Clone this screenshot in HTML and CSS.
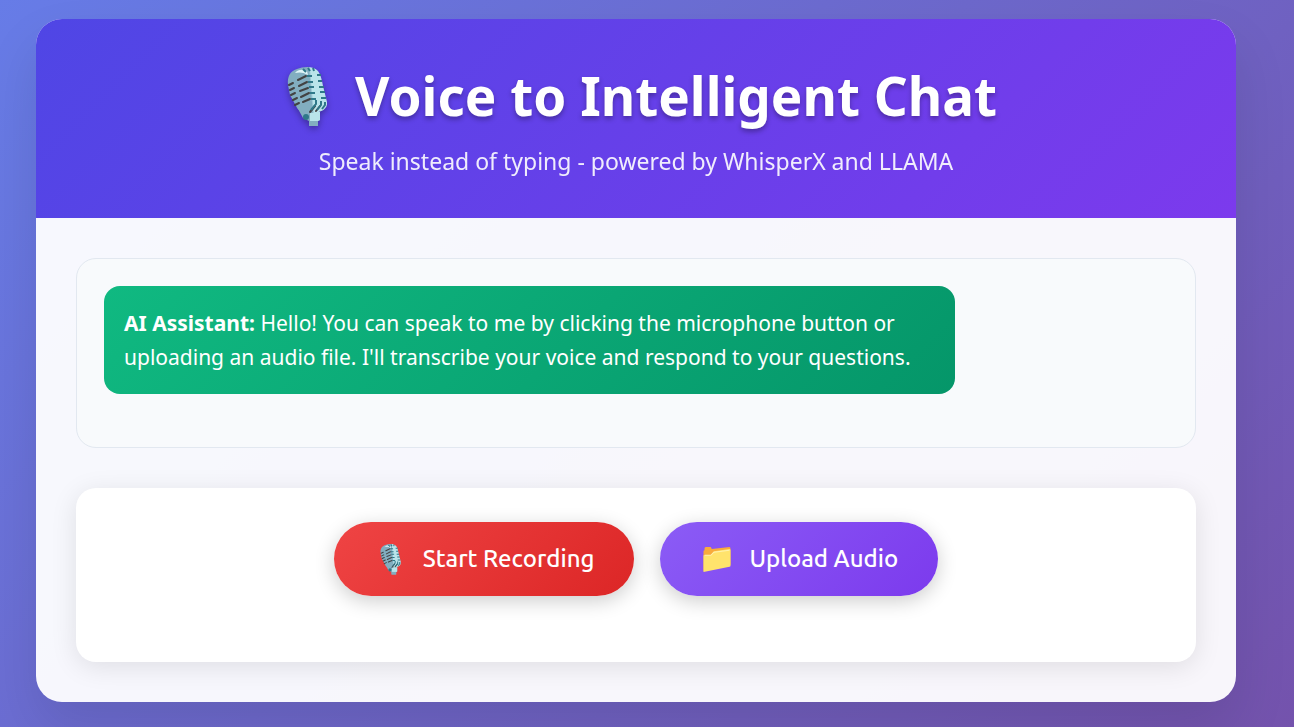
FILE: index.html
```html
<!DOCTYPE html>
<html lang="en">
<head>
<meta charset="utf-8">
<title>Voice to Intelligent Chat</title>
<link rel="stylesheet" href="styles.css">
</head>
<body>
<svg class="sprite" aria-hidden="true">
  <defs>
    <linearGradient id="metal" x1="0" y1="0.1" x2="1" y2="0">
      <stop offset="0" stop-color="#82aec0"/>
      <stop offset="0.53" stop-color="#82aec0"/>
      <stop offset="0.58" stop-color="#b9e4ea"/>
      <stop offset="1" stop-color="#b9e4ea"/>
    </linearGradient>
  </defs>
  <symbol id="mic" viewBox="0 -1 44 62">
    <path d="M11 41 L17 52 L23 55 V60 H32 V55 L34 54 V46 Z" fill="#82aec0"/>
    <path d="M24 46 H34 V54 L32 55 H24 Z" fill="#b9e4ea"/>
    <path d="M23 55 H32 V60 H23 Z" fill="#82aec0"/>
    <circle cx="20" cy="51" r="3" fill="#2f7889"/>
    <path d="M2 19 C1 11 4 5 11 3 C18 0 28 0 32 5 C35 9 36 15 37 20 L41 36 C42 43 35 47 25 47 C18 48 12 45 10 40 L4 29 Z" fill="url(#metal)"/>
    <path d="M9 7 C12 3 17 3 21 5 L22 9 C17 6 13 6 9 7 Z" fill="#e0f5f7"/>
    <path d="M3 19 L7 17 M4 24 L8 22 M5 29 L9 27 M7 34 L11 32 M9 39 L13 37 M12 14 L20 10 M13 20 L21 16 M14 25 L22 22 M15 31 L23 27 M17 36 L24 33 M24 46 L29 40 M30 45 L34 40" fill="none" stroke="#424242" stroke-width="2" stroke-linecap="round"/>
    <path d="M17 3 L20 6 M22 2 L24 5 M27 2 L28 5 M21 10 H26 M31 9 H35 M22 16 H27 M32 15 H36 M23 21 H28 M33 21 H38 M24 27 H29 M34 26 H39 M25 33 H30 M35 32 H40 M25 44 L30 38 V34 M31 44 L35 39 V35 M36 43 L39 39 V36" fill="none" stroke="#2f7889" stroke-width="2"/>
  </symbol>
  <symbol id="folder" viewBox="0 0 28 26">
    <path d="M1 24 V5 Q1 4 2 4 V2 L3 1 H8 L9 3 L26 1 Q27 1 27 3 V18 Z" fill="#f8ab3c"/>
    <path d="M1 25 V9 H8 L11 5 L26 3 Q27 3 27 4 V19 Q27 20 26 20 Z" fill="#ffe36c"/>
    <path d="M2 9 H8 L11 6 L26 4" fill="none" stroke="#fff2b0" stroke-width="1"/>
  </symbol>
</svg>
<main class="card">
  <header class="hero">
    <h1 class="title"><svg class="title-icon" aria-hidden="true"><use href="#mic"/></svg>Voice to Intelligent Chat</h1>
    <p class="subtitle">Speak instead of typing - powered by WhisperX and LLAMA</p>
  </header>
  <div class="content">
    <section class="chat">
      <p class="message"><strong>AI Assistant:</strong> Hello! You can speak to me by clicking the microphone button or uploading an audio file. I'll transcribe your voice and respond to your questions.</p>
    </section>
    <section class="controls">
      <button class="btn btn-record" type="button"><svg class="btn-icon" aria-hidden="true"><use href="#mic"/></svg>Start Recording</button>
      <button class="btn btn-upload" type="button"><svg class="btn-icon btn-folder" aria-hidden="true"><use href="#folder"/></svg>Upload Audio</button>
    </section>
  </div>
</main>
</body>
</html>
```
FILE: styles.css
```css
* { box-sizing: border-box; margin: 0; padding: 0; }
body {
  min-height: 100vh;
  padding: 19px 58px 25px 36px;
  font-family: "Noto Sans", sans-serif;
  background: linear-gradient(135deg, #667eea -5%, #764ba2 118%);
}
.sprite { position: absolute; width: 0; height: 0; }
.card {
  max-width: 1200px;
  margin: 0 auto;
  border-radius: 26px;
  overflow: hidden;
  background: rgba(255, 255, 255, 0.95);
  box-shadow: 0 27px 54px rgba(0, 0, 0, 0.1);
}
.hero {
  padding: 40px;
  text-align: center;
  color: #fff;
  background: linear-gradient(135deg, #4f46e5, #7c3aed);
}
.title {
  display: flex;
  justify-content: center;
  align-items: center;
  gap: 14px;
  font-size: 53px;
  line-height: 74px;
  font-weight: 700;
  text-shadow: 0 3px 5px rgba(0, 0, 0, 0.3);
}
.title-icon {
  width: 66px;
  height: 62px;
  filter: drop-shadow(0 3px 3px rgba(0, 0, 0, 0.3));
}
.subtitle {
  margin-top: 12px;
  font-size: 23px;
  line-height: 33px;
  opacity: 0.9;
}
.content { display: grid; gap: 40px; padding: 40px; }
.chat {
  min-height: 190px;
  padding: 27px;
  border: 1px solid #e2e8f0;
  border-radius: 20px;
  background: #f8fafc;
}
.message {
  max-width: 80%;
  padding: 20px;
  border-radius: 16px;
  font-size: 21px;
  line-height: 34px;
  color: #fff;
  background: linear-gradient(135deg, #10b981, #059669);
}
.controls {
  display: flex;
  justify-content: center;
  align-items: flex-start;
  gap: 26px;
  min-height: 174px;
  padding: 34px;
  border-radius: 20px;
  background: #fff;
  box-shadow: 0 5px 27px rgba(0, 0, 0, 0.1);
}
.btn {
  display: flex;
  align-items: center;
  gap: 15px;
  padding: 20px 40px;
  border: 0;
  border-radius: 66px;
  font-family: Ubuntu, "Noto Sans", sans-serif;
  font-size: 24px;
  line-height: 34px;
  font-weight: 500;
  color: #fff;
  cursor: pointer;
  box-shadow: 0 5px 20px rgba(0, 0, 0, 0.2);
}
.btn-record { background: linear-gradient(135deg, #ef4444, #dc2626); }
.btn-upload { background: linear-gradient(135deg, #8b5cf6, #7c3aed); }
.btn-icon { width: 34px; height: 32px; }
.btn-folder { height: 27px; }
```
